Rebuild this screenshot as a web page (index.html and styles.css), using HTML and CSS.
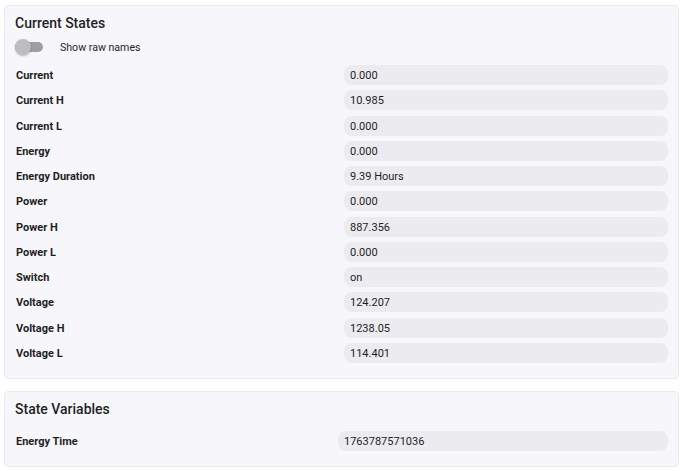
FILE: index.html
```html
<!DOCTYPE html>
<html lang="en">
<head>
  <meta charset="UTF-8" />
  <title>Device States</title>
  <link rel="stylesheet" href="styles.css">
</head>
<body>
  <section class="card">
    <h2>Current States</h2>
    <label class="toggle">
      <span class="switch"><span class="thumb"></span></span>
      <span>Show raw names</span>
    </label>
    <div class="states">
      <div class="name">Current</div><div class="value">0.000</div>
      <div class="name">Current H</div><div class="value">10.985</div>
      <div class="name">Current L</div><div class="value">0.000</div>
      <div class="name">Energy</div><div class="value">0.000</div>
      <div class="name">Energy Duration</div><div class="value">9.39 Hours</div>
      <div class="name">Power</div><div class="value">0.000</div>
      <div class="name">Power H</div><div class="value">887.356</div>
      <div class="name">Power L</div><div class="value">0.000</div>
      <div class="name">Switch</div><div class="value">on</div>
      <div class="name">Voltage</div><div class="value">124.207</div>
      <div class="name">Voltage H</div><div class="value">1238.05</div>
      <div class="name">Voltage L</div><div class="value">114.401</div>
    </div>
  </section>

  <section class="card">
    <h2>State Variables</h2>
    <div class="states vars">
      <div class="name">Energy Time</div><div class="value">1763787571036</div>
    </div>
  </section>
</body>
</html>
```

FILE: styles.css
```css
body {
  margin: 0;
  padding: 5px 11px 0 4px;
  background: #fff;
  font-family: Roboto, "Liberation Sans", sans-serif;
  color: #1f1f24;
}
.card {
  background: #f7f7fb;
  border: 1px solid #eaeaef;
  border-radius: 4px;
  padding: 7px 10px 15px 10px;
  margin-bottom: 12px;
}
.card h2 {
  margin: 0;
  font-size: 14px;
  font-weight: 500;
  line-height: 20px;
}
.toggle {
  display: flex;
  align-items: center;
  gap: 17px;
  margin-top: 6px;
  height: 16px;
  font-size: 10.6px;
}
.switch {
  position: relative;
  display: inline-block;
  width: 28px;
  height: 10px;
  border-radius: 5px;
  background: #9e9ea4;
}
.thumb {
  position: absolute;
  left: 0;
  top: -3px;
  width: 16px;
  height: 16px;
  border-radius: 50%;
  background: #bdbdc0;
  box-shadow: 0 1px 2px rgba(0,0,0,0.25);
}
.states {
  display: grid;
  grid-template-columns: 329px 1fr;
  row-gap: 5.27px;
  margin-top: 10px;
  font-size: 11px;
}
.states.vars {
  grid-template-columns: 323px 1fr;
  margin-top: 12px;
}
.name,
.value {
  height: 20px;
  line-height: 21px;
}
.name {
  font-weight: 700;
  padding-left: 1px;
}
.value {
  background: #ebebf0;
  border-radius: 8px;
  padding-left: 6px;
}
```
